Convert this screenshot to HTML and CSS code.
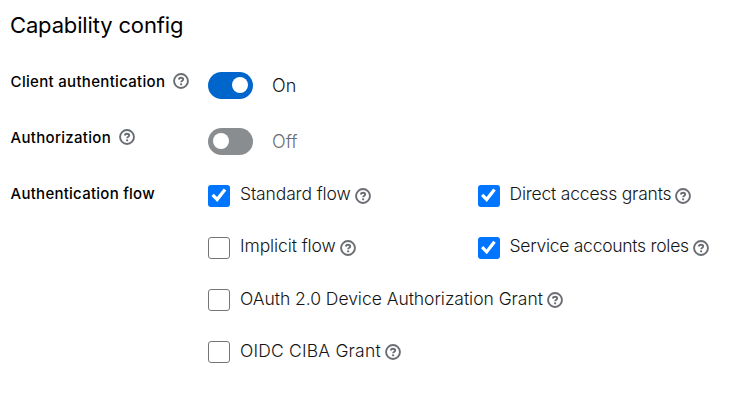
FILE: index.html
```html
<!DOCTYPE html>
<html lang="en">
<head>
<meta charset="utf-8">
<title>Capability config</title>
<link rel="stylesheet" href="styles.css">
</head>
<body>
<svg class="defs" width="0" height="0" aria-hidden="true">
  <symbol id="help" viewBox="0 0 16 16">
    <circle cx="8" cy="8" r="6.950" fill="none" stroke="currentColor" stroke-width="1.900"/>
    <path d="M5.700 6.400C6 5.200 6.900 4.700 8 4.700c1.300 0 2.200.7 2.200 1.700C10.200 7.700 8.100 7.700 8.100 9.300" fill="none" stroke="currentColor" stroke-width="1.900"/>
    <circle cx="8.100" cy="11.300" r="1.150" fill="currentColor"/>
  </symbol>
</svg>
<main class="panel">
  <h1 class="title">Capability config</h1>
  <div class="row">
    <div class="label"><span class="t-client">Client authentication</span><svg class="help"><use href="#help"/></svg></div>
    <div class="switch on"><span class="track"><span class="knob"></span></span><span class="state">On</span></div>
  </div>
  <div class="row">
    <div class="label"><span class="t-authz">Authorization</span><svg class="help"><use href="#help"/></svg></div>
    <div class="switch"><span class="track"><span class="knob"></span></span><span class="state">Off</span></div>
  </div>
  <div class="row">
    <div class="label"><span class="t-flow">Authentication flow</span></div>
    <div class="checks">
      <label class="check"><input type="checkbox" checked><span class="t-standard">Standard flow</span><svg class="help"><use href="#help"/></svg></label>
      <label class="check"><input type="checkbox" checked><span class="t-direct">Direct access grants</span><svg class="help"><use href="#help"/></svg></label>
      <label class="check"><input type="checkbox"><span class="t-implicit">Implicit flow</span><svg class="help"><use href="#help"/></svg></label>
      <label class="check"><input type="checkbox" checked><span class="t-service">Service accounts roles</span><svg class="help"><use href="#help"/></svg></label>
      <label class="check wide"><input type="checkbox"><span class="t-oauth">OAuth 2.0 Device Authorization Grant</span><svg class="help"><use href="#help"/></svg></label>
      <label class="check wide"><input type="checkbox"><span class="t-ciba">OIDC CIBA Grant</span><svg class="help"><use href="#help"/></svg></label>
    </div>
  </div>
</main>
</body>
</html>
```
FILE: styles.css
```css
* { box-sizing: border-box; }
body { margin: 0; background: #fff; color: #151515; font-family: Inter, "Liberation Sans", sans-serif; }
.defs { display: block; }
.panel { padding: 9px 10px 0; }
.title { margin: 0; height: 62px; font-size: 22px; line-height: 32px; font-weight: 400; letter-spacing: -0.150px; color: #000; }
.row { display: grid; grid-template-columns: 198px 1fr; min-height: 56px; }
.label { display: flex; align-items: center; height: 20px; gap: 8px; padding-left: 0.600px; font-size: 15px; font-weight: 500; color: #000; white-space: nowrap; }
.help { width: 16px; height: 16px; flex: none; color: #6a6e73; }
.switch { display: flex; align-items: center; height: 28px; gap: 19px; font-size: 18px; font-weight: 300; color: #6a6e73; }
.track { display: flex; align-items: center; width: 45px; height: 27px; padding: 0 5px; border-radius: 14px; background: #8a8d90; }
.knob { width: 16px; height: 16px; border-radius: 50%; background: #fff; }
.on { color: #151515; }
.on .track { justify-content: flex-end; background: #06c; }
.checks { display: grid; grid-template-columns: 269.500px 1fr; grid-auto-rows: 52.300px; }
.check { display: flex; align-items: center; height: 21px; font-size: 17.500px; font-weight: 300; white-space: nowrap; }
.check input { appearance: none; flex: none; width: 22px; height: 22px; margin: 4px 10px 0 0; border: 1px solid #767676; border-radius: 3px; background: #fff; }
.check input:checked { border: 0; background: #0075ff; }
.check input:checked::before { content: ""; display: block; width: 22px; height: 22px; background: #fff; clip-path: polygon(3.500px 11.500px, 5.800px 9.300px, 9px 12.600px, 15.700px 4px, 18.300px 6px, 9.300px 17.500px); }
.check .help { margin: 4px 0 0 4px; }
.wide { grid-column: 1 / -1; }
.t-client { letter-spacing: 0.310px; }
.t-authz { letter-spacing: 0.300px; }
.t-flow { letter-spacing: 0.250px; }
.t-standard { letter-spacing: -0.140px; }
.t-direct { letter-spacing: -0.200px; }
.t-implicit { letter-spacing: -0.100px; }
.t-service { letter-spacing: -0.270px; }
.t-oauth { letter-spacing: -0.040px; }
.t-ciba { letter-spacing: 0.190px; }
```
